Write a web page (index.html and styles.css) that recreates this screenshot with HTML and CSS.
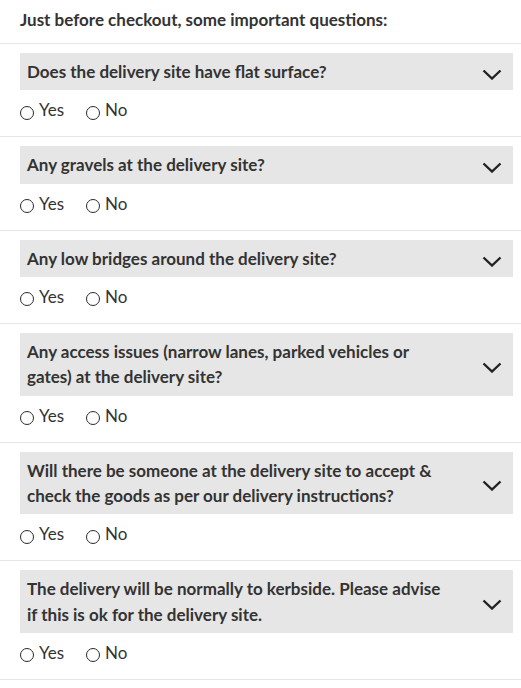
FILE: index.html
```html
<!DOCTYPE html>
<html lang="en">
<head>
<meta charset="utf-8">
<title>Checkout questions</title>
<link rel="stylesheet" href="styles.css">
</head>
<body>
<div class="page">
  <h2 class="intro">Just before checkout, some important questions:</h2>

  <section class="question">
    <div class="q-head">
      <span class="q-text">Does the delivery site have flat surface?</span>
      <svg class="chev" viewBox="0 0 20 11" width="20" height="11"><polyline points="1.5,1.5 10,9.5 18.5,1.5"/></svg>
    </div>
    <div class="answers">
      <label class="opt"><span class="radio"></span>Yes</label>
      <label class="opt"><span class="radio"></span>No</label>
    </div>
  </section>

  <section class="question">
    <div class="q-head">
      <span class="q-text">Any gravels at the delivery site?</span>
      <svg class="chev" viewBox="0 0 20 11" width="20" height="11"><polyline points="1.5,1.5 10,9.5 18.5,1.5"/></svg>
    </div>
    <div class="answers">
      <label class="opt"><span class="radio"></span>Yes</label>
      <label class="opt"><span class="radio"></span>No</label>
    </div>
  </section>

  <section class="question">
    <div class="q-head">
      <span class="q-text">Any low bridges around the delivery site?</span>
      <svg class="chev" viewBox="0 0 20 11" width="20" height="11"><polyline points="1.5,1.5 10,9.5 18.5,1.5"/></svg>
    </div>
    <div class="answers">
      <label class="opt"><span class="radio"></span>Yes</label>
      <label class="opt"><span class="radio"></span>No</label>
    </div>
  </section>

  <section class="question">
    <div class="q-head">
      <span class="q-text">Any access issues (narrow lanes, parked vehicles or gates) at the delivery site?</span>
      <svg class="chev" viewBox="0 0 20 11" width="20" height="11"><polyline points="1.5,1.5 10,9.5 18.5,1.5"/></svg>
    </div>
    <div class="answers">
      <label class="opt"><span class="radio"></span>Yes</label>
      <label class="opt"><span class="radio"></span>No</label>
    </div>
  </section>

  <section class="question">
    <div class="q-head">
      <span class="q-text">Will there be someone at the delivery site to accept &amp; check the goods as per our delivery instructions?</span>
      <svg class="chev" viewBox="0 0 20 11" width="20" height="11"><polyline points="1.5,1.5 10,9.5 18.5,1.5"/></svg>
    </div>
    <div class="answers">
      <label class="opt"><span class="radio"></span>Yes</label>
      <label class="opt"><span class="radio"></span>No</label>
    </div>
  </section>

  <section class="question">
    <div class="q-head">
      <span class="q-text">The delivery will be normally to kerbside. Please advise if this is ok for the delivery site.</span>
      <svg class="chev" viewBox="0 0 20 11" width="20" height="11"><polyline points="1.5,1.5 10,9.5 18.5,1.5"/></svg>
    </div>
    <div class="answers">
      <label class="opt"><span class="radio"></span>Yes</label>
      <label class="opt"><span class="radio"></span>No</label>
    </div>
  </section>
</div>
</body>
</html>
```

FILE: styles.css
```css
* { box-sizing: border-box; }
html, body { margin: 0; padding: 0; background: #fff; }
body {
  font-family: Lato, "Noto Sans", "Liberation Sans", sans-serif;
  color: #333;
  font-size: 17px;
}
.page { width: 521px; }
.intro {
  margin: 0;
  padding: 9px 20px 0 20px;
  height: 43px;
  font-size: 17px;
  line-height: 22px;
  font-weight: 700;
  color: #333;
}
.question {
  border-top: 1px solid #e6e6e6;
  padding: 9px 8px 14px 20px;
}
.question:last-child { border-bottom: 1px solid #e6e6e6; }
.q-head {
  display: flex;
  align-items: center;
  background: #e6e6e6;
  padding: 6px 11px 6px 7px;
}
.q-text {
  flex: 0 1 425px;
  font-weight: 700;
  line-height: 25.33px;
  color: #333;
}
.chev {
  margin-left: auto;
  margin-top: 6px;
  fill: none;
  stroke: #222;
  stroke-width: 2.4;
}
.answers {
  display: flex;
  gap: 22px;
  margin-top: 8px;
  height: 24px;
  align-items: center;
  line-height: 24px;
}
.opt {
  display: flex;
  align-items: center;
  gap: 5px;
}
.radio {
  width: 14px;
  height: 14px;
  border: 1px solid #2a2a2a;
  border-radius: 50%;
  margin-top: 5px;
}
```
